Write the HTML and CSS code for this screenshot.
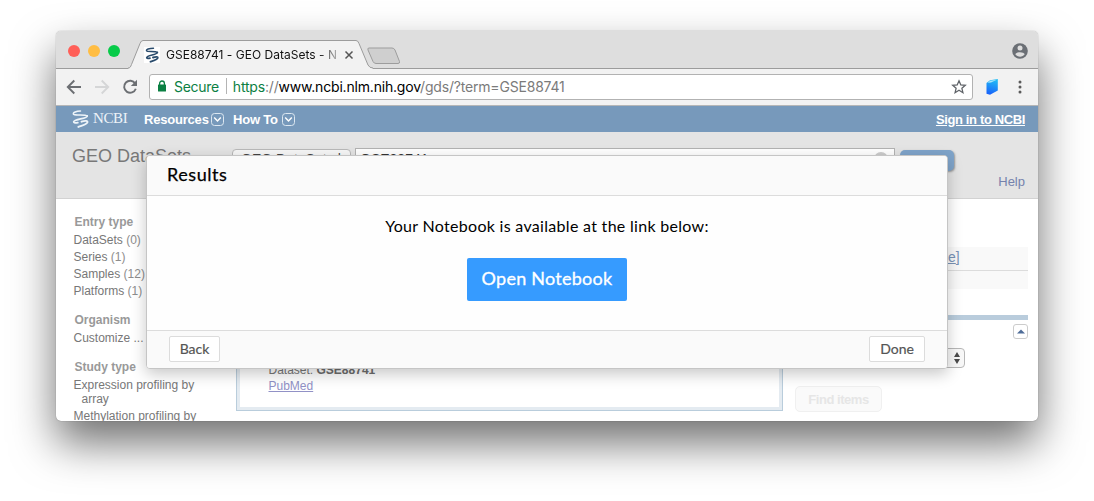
FILE: index.html
```
<!DOCTYPE html>
<html lang="en">
<head>
<meta charset="utf-8">
<title>GSE88741 - GEO DataSets - NCBI</title>
<link rel="stylesheet" href="styles.css">
</head>
<body>
<div class="window">
  <header class="tabbar">
    <div class="lights"><i class="red"></i><i class="amber"></i><i class="green"></i></div>
    <div class="tab">
      <svg class="tab-shape" width="246" height="29" viewBox="0 0 246 29"><path d="M0 28.5C2 28 2.500 27 3.500 24.500L12 3.500Q13 .5 15 .5H228Q230 .5 231 3.500L240 25Q241.500 28 245 28.500V29H0Z" fill="#f2f2f2"/><path d="M0 28C2 28 2.500 27 3.500 24.500L12 3.500Q13 .5 15 .5H228Q230 .5 231 3.500L240 25Q241.500 28 245 28" fill="none" stroke="#9c9c9c"/></svg>
      <span class="favicon"><svg width="16" height="16" viewBox="0 0 16 16" fill="none" stroke="#294b6c" stroke-linecap="round"><path d="M9.500 1.300C5 1.300 2 2.300 2.500 3.700C3 5.200 11.500 3.600 13.400 5.400" stroke-width="1.400"/><path d="M13.400 5.400C13.500 8 3 8 2.700 10.600C2.700 11.700 4.500 11.500 6 11.200" stroke-width="1.700"/><path d="M9 10.500C12 9.500 14 9.600 13.700 11C13 13 9.500 13.800 6.500 14.700" stroke-width="1.900"/></svg></span>
      <span class="tab-title">GSE88741 - GEO DataSets - N</span>
      <svg class="tab-close" width="10" height="10" viewBox="0 0 10 10" stroke="#555" stroke-width="1.500"><path d="M1.500 1.500l7 7M8.500 1.500l-7 7"/></svg>
    </div>
    <svg class="newtab" width="34" height="18" viewBox="0 0 34 18"><path d="M2 1H25Q27 1 28 3L32.500 14.500Q33 16.500 31 16.500H9Q7 16.500 6 14.500L1 3Q.3 1 2 1Z" fill="#cfcfcf" stroke="#9d9d9d"/></svg>
    <svg class="avatar" width="16" height="16" viewBox="0 0 16 16"><circle cx="8" cy="8" r="7.800" fill="#6b6f75"/><circle cx="8" cy="5" r="2.500" fill="#dedede"/><path d="M3.300 11.200C4 8.500 12 8.500 12.700 11.200C10.500 14.500 5.500 14.500 3.300 11.200Z" fill="#dedede"/></svg>
  </header>

  <div class="toolbar">
    <svg class="nav" width="16" height="16" viewBox="0 0 16 16" fill="none" stroke="#6c6f73" stroke-width="1.900"><path d="M15 8H2M8.300 1.500L1.800 8l6.500 6.500"/></svg>
    <svg class="nav" width="16" height="16" viewBox="0 0 16 16" fill="none" stroke="#d5d6d7" stroke-width="1.900"><path d="M1 8h13M7.700 1.500L14.200 8l-6.500 6.500"/></svg>
    <svg class="nav" width="16" height="16" viewBox="0 0 16 16"><path d="M13.200 4.500A6 6 0 1 0 13.800 9.800" fill="none" stroke="#6c6f73" stroke-width="1.900"/><path d="M15 .8V7H8.800Z" fill="#6c6f73"/></svg>
    <div class="omnibox">
      <svg width="10" height="12" viewBox="0 0 10 12"><path d="M2.600 5V3.400a2.400 2.400 0 0 1 4.800 0V5" fill="none" stroke="#0b8043" stroke-width="1.300"/><rect x="1" y="4.500" width="8" height="7" rx=".6" fill="#0b8043"/></svg>
      <span class="secure">Secure</span><i class="divider"></i>
      <span class="url"><b class="https">https</b><span>://</span><b>www.ncbi.nlm.nih.gov</b><span>/gds/?term=GSE88741</span></span>
      <svg class="star" width="16" height="16" viewBox="0 0 16 16"><path d="M8 1.800l1.800 4.100 4.500.4-3.400 3 1 4.400L8 11.300l-3.900 2.400 1-4.400-3.400-3 4.500-.4Z" fill="none" stroke="#5f6368" stroke-width="1.300"/></svg>
    </div>
    <svg class="book" width="14" height="18" viewBox="0 0 14 18"><defs><linearGradient id="bk" x1=".6" y1="0" x2=".4" y2="1"><stop offset="0" stop-color="#22bdf5"/><stop offset="1" stop-color="#1861fa"/></linearGradient></defs><path d="M1.500 5L5 2.200L12.800 1V12.500L5 16.800L1.500 15.800Z" fill="url(#bk)"/><path d="M2.500 4.700L5.200 2.800L11.700 1.700L6 4.400Z" fill="#a5e6fb"/></svg>
    <svg class="dots" width="4" height="14" viewBox="0 0 4 14" fill="#5b5b5b"><circle cx="2" cy="2" r="1.500"/><circle cx="2" cy="7" r="1.500"/><circle cx="2" cy="12" r="1.500"/></svg>
  </div>

  <nav class="ncbi">
    <svg width="17" height="18" viewBox="0 0 16 17" fill="none" stroke="#eef4f9" stroke-linecap="round"><path d="M8 1C4 1.200 .8 2.300 1.300 3.900C2 5.600 12 3.600 14.400 5.600" stroke-width="1.400"/><path d="M14.400 5.600C14.500 8.400 2 8.400 1.500 11.200C1.500 12.400 3.500 12.300 5.500 11.900" stroke-width="1.600"/><path d="M9 11C12.500 9.800 15 10 14.500 11.700C13.500 14 9.500 14.600 6 16" stroke-width="1.800"/></svg>
    <span class="brand">NCBI</span>
    <span class="menu">Resources</span>
    <svg class="drop" width="13" height="13" viewBox="0 0 13 13" fill="none" stroke="#fff"><rect x=".5" y=".5" width="12" height="12" rx="3" stroke="#dce7f1"/><path d="M3.200 4.500l3.300 3.500 3.300-3.500" stroke-width="1.400"/></svg>
    <span class="menu second">How To</span>
    <svg class="drop" width="13" height="13" viewBox="0 0 13 13" fill="none" stroke="#fff"><rect x=".5" y=".5" width="12" height="12" rx="3" stroke="#dce7f1"/><path d="M3.200 4.500l3.300 3.500 3.300-3.500" stroke-width="1.400"/></svg>
    <a class="signin">Sign in to NCBI</a>
  </nav>

  <section class="search">
    <h1>GEO DataSets</h1>
    <div class="db">GEO DataSets |</div>
    <div class="query"><span>GSE88741</span><i></i></div>
    <div class="go"></div>
    <a class="help">Help</a>
  </section>

  <main class="page">
    <aside class="filters">
      <h2>Entry type</h2>
      <p>DataSets <s>(0)</s></p><p>Series <s>(1)</s></p><p>Samples <s>(12)</s></p><p>Platforms <s>(1)</s></p>
      <h2>Organism</h2>
      <p>Customize ...</p>
      <h2>Study type</h2>
      <p class="wrap">Expression profiling by array</p>
      <p class="wrap">Methylation profiling by</p>
    </aside>
    <article class="result"><p>Dataset: <b>GSE88741</b></p><a>PubMed</a></article>
    <aside class="side">
      <div class="manage"><div class="link"><u>e</u>]</div></div>
      <div class="rule"></div>
      <div class="toggle"><svg width="8" height="5" viewBox="0 0 8 5"><path d="M0 4.500L4 .5l4 4Z" fill="#4e6c98"/></svg></div>
      <div class="choice"><svg width="8" height="12" viewBox="0 0 8 12" fill="#4a4a4a"><path d="M1 5l3-5 3 5ZM1 7h6l-3 5Z"/></svg></div>
      <div class="find">Find items</div>
    </aside>
  </main>
  <div class="modal">
    <div class="modal-head">Results</div>
    <div class="modal-body"><p>Your Notebook is available at the link below:</p><div class="open"><span>Open Notebook</span></div></div>
    <div class="modal-foot"><div class="btn back">Back</div><div class="btn done">Done</div></div>
  </div>
</div>
</body>
</html>
```
FILE: styles.css
```
* { box-sizing: border-box; }
html, body { height: 100%; }
body { margin: 0; padding: 31px 56px 80px; background: #fff; font-family: "Liberation Sans", Arial, sans-serif; overflow: hidden; }
svg { display: block; flex: none; }
h1, h2, p { margin: 0; font-weight: normal; }

.window { position: relative; width: 982px; height: 390px; display: flex; flex-direction: column; border-radius: 5px; background: #fff;
  box-shadow: 0 0 1px rgba(0,0,0,.5), 0 22px 44px rgba(0,0,0,.56); white-space: nowrap; }

.tabbar { height: 38px; flex: none; display: flex; align-items: flex-start; background: #dedede; border-bottom: 1px solid #9c9c9c; border-radius: 5px 5px 0 0; }
.lights { display: flex; gap: 8px; padding: 14px 0 0 12px; width: 72px; }
.lights i { width: 12px; height: 12px; border-radius: 50%; }
.red { background: #ff5f58; }
.amber { background: #ffbd43; }
.green { background: #07cb49; }
.tab { position: relative; width: 243px; height: 29px; margin-top: 9px; display: flex; align-items: center; padding-left: 16px; }
.tab-shape { position: absolute; left: 0; top: 0; }
.favicon { position: relative; width: 16px; height: 16px; background: #fff; margin-right: 6px; }
.tab-title { position: relative; width: 176px; overflow: hidden; font: 12px Inter, sans-serif; letter-spacing: .02px; color: #111;
  -webkit-mask-image: linear-gradient(90deg, #000 152px, transparent 179px); }
.tab-close { position: relative; margin-left: 2px; }
.newtab { margin: 16px 0 0 -4px; }
.avatar { margin: 12px 10px 0 auto; }

.toolbar { height: 37px; flex: none; display: flex; align-items: center; background: #f2f2f2; border-bottom: 1px solid #b5b6b7; padding: 0 16px 0 10px; }
.nav { margin-right: 12px; }
.omnibox { width: 824px; height: 26px; margin-left: -1px; border: 1px solid #b2b2b2; border-radius: 3px; background: #fff; display: flex; align-items: center; padding: 0 5px 2px 7px; font: 14px Inter, sans-serif; }
.secure { color: #0b8043; margin-left: 7px; letter-spacing: -.3px; }
.divider { width: 1px; height: 16px; background: #b4b4b4; margin: 0 6px 0 7px; }
.url { color: #7b7b7b; letter-spacing: -.19px; }
.url b { font-weight: 400; color: #000; }
.url .https { color: #0b8043; }
.star { margin-left: auto; margin-top: 2px; }
.book { margin-left: 12px; }
.dots { margin-left: auto; }

.ncbi { height: 26px; flex: none; display: flex; align-items: center; background: #7799bb; color: #fff; font-size: 13px; padding: 0 13px 0 16px; }
.brand { font: 15px "Liberation Serif", serif; letter-spacing: -.4px; width: 40px; margin: -1px 11px 0 4px; color: #edf3f8; }
.menu { font-weight: bold; letter-spacing: -.2px; width: 64px; margin-right: 3px; }
.menu.second { width: 46px; margin-left: 9px; }
.signin { margin-left: auto; font-weight: bold; letter-spacing: -.37px; text-decoration: underline; }

.search { height: 67px; flex: none; display: flex; align-items: flex-start; background: #e4e4e4; border-bottom: 1px solid #d2d2d2; padding: 16px 13px 0 16px; overflow: hidden; }
.search h1 { width: 160px; padding-top: 1px; font-size: 18px; line-height: 20px; margin-top: -3px; color: #787878; }
.db { width: 119px; height: 26px; margin-top: 1px; border: 1px solid #b9b9b9; border-radius: 4px; background: #f7f7f7; padding: 0 8px; font-size: 14px; line-height: 18px; overflow: hidden; color: #444; }
.query { width: 540px; height: 26px; margin-left: 4px; border: 1px solid #b3b3b3; background: #fff; padding: 1px 4px; display: flex; font-size: 14px; line-height: 18px; color: #333; }
.query i { width: 14px; height: 14px; border-radius: 50%; background: #ccc; margin: 2px 2px 0 auto; }
.go { width: 54px; height: 21px; margin: 2px 0 0 5px; border-radius: 5px; background: #7fa4ca; box-shadow: 1px 1px 2px #999; }
.help { margin: 25px 0 0 auto; font-size: 13px; line-height: 18px; color: #7582ad; }

.page { flex: 1; min-height: 0; display: grid; grid-template-columns: 180px 547px 245px; overflow: hidden; border-radius: 0 0 5px 5px; }
.filters { padding: 0 0 0 17.500px; font-size: 12px; line-height: 17px; color: #777; }
.filters h2 { font-size: 12px; line-height: 17px; font-weight: bold; color: #999; margin: 12px 0 1px 1px; }
.filters h2:first-child { margin-top: 15px; }
.filters s { text-decoration: none; color: #8d8d8d; }
.filters .wrap { white-space: normal; width: 135px; line-height: 14px; padding: 1px 0 2px 8px; text-indent: -8px; }
.result { height: 212px; border: 1px solid #b9cddc; box-shadow: inset 0 0 0 3px #e4ebf1; padding: 162px 0 0 31.500px; font-size: 12px; line-height: 16px; color: #777; }
.result b { color: #6d6d6d; }
.result a { color: #9191c6; text-decoration: underline; }
.side { margin-left: 12px; width: 233px; display: flex; flex-direction: column; }
.manage { margin-top: 48px; background: #f9f9f9; height: 42px; }
.link { height: 24px; border-bottom: 1px solid #dcdcdc; padding-left: 153px; font-size: 14px; line-height: 21px; color: #7893b7; }
.rule { margin-top: 26px; height: 5px; background: #b9ccdc; }
.toggle { align-self: flex-end; width: 15px; height: 15px; margin-top: 4px; border: 1px solid #ccc; border-radius: 3px; display: grid; place-items: center; }
.choice { width: 170px; height: 20px; margin-top: 9px; border: 1px solid #b7b7b7; border-radius: 4px; background: #f8f8f8; display: flex; align-items: center; justify-content: flex-end; padding-right: 3px; }
.find { width: 87px; height: 26px; margin-top: 18px; border: 1px solid #f0f0f0; border-radius: 5px; background: #fafafa; text-align: center; font-size: 13px; line-height: 25px; font-weight: bold; letter-spacing: -.45px; color: #e6e6e6; }

.modal { position: absolute; left: 90px; top: 124px; width: 802px; height: 214px; display: flex; flex-direction: column; background: #fefefe; border: 1px solid #c5c5c5; border-radius: 4px; box-shadow: 0 5px 15px rgba(0,0,0,.22); overflow: hidden; font-family: Lato, sans-serif; }
.modal-head { height: 40px; background: #fafafa; border-bottom: 1px solid #dcdcdc; padding-left: 20px; font-size: 18px; line-height: 36px; letter-spacing: .55px; color: #000; -webkit-text-stroke: .25px #000; }
.modal-body { flex: 1; display: flex; flex-direction: column; align-items: center; padding-top: 19px; font-size: 16px; line-height: 22px; letter-spacing: .3px; color: #000; }
.open { width: 160px; height: 43px; margin-top: 21px; border-radius: 2px; background: #369bff; color: #fff; text-align: center; font-size: 18px; line-height: 41px; letter-spacing: .25px; -webkit-text-stroke: .3px #fff; }
.modal-foot { height: 38px; background: #fafafa; border-top: 1px solid #dcdcdc; display: flex; justify-content: space-between; padding: 5px 22px 0; }
.btn { height: 26px; border: 1px solid #dcdcdc; border-radius: 2px; background: #fff; text-align: center; font-size: 14px; line-height: 23px; color: #555; -webkit-text-stroke: .2px #555; }
.back { width: 51px; }
.done { width: 56px; }
```
